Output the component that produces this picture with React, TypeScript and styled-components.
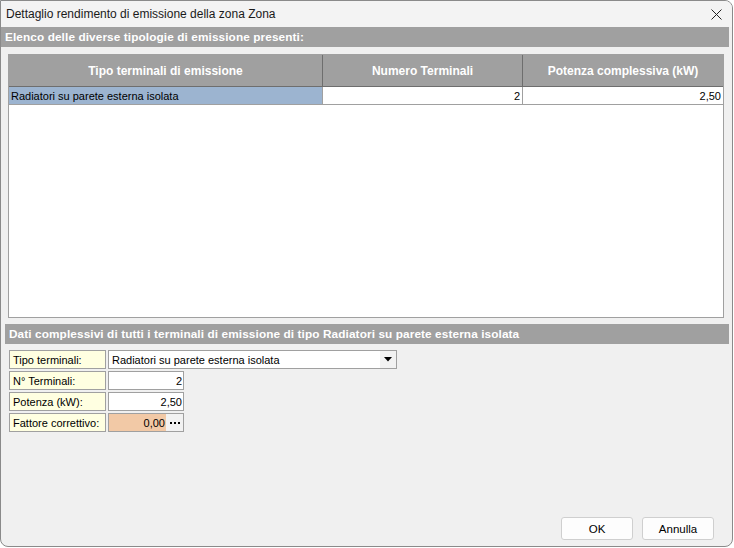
import React from "react";
import styled, { createGlobalStyle } from "styled-components";

const Global = createGlobalStyle`
  html, body {
    margin: 0;
    padding: 0;
    background: #ffffff;
  }
  body {
    font-family: "Liberation Sans", Arial, sans-serif;
    font-size: 11px;
    color: #000;
  }
`;

const Window = styled.div`
  width: 733px;
  height: 547px;
  box-sizing: border-box;
  border: 1px solid #8a8a8a;
  border-radius: 0 8px 8px 8px;
  background: #f0f0f0;
  display: flex;
  flex-direction: column;
  overflow: hidden;
`;

const TitleBar = styled.div`
  height: 26px;
  display: flex;
  align-items: center;
  justify-content: space-between;
  padding: 0 10px 0 5px;
  background: #f3f3f3;
  font-size: 12px;
  color: #1a1a1a;
`;

const CloseIcon = styled.svg`
  width: 11px;
  height: 11px;
  margin-top: 1px;
`;

const SectionBar = styled.div<{ $inset?: number; $top?: number }>`
  height: 20px;
  margin: ${({ $top }) => $top ?? 0}px 3px 0 ${({ $inset }) => $inset ?? 0}px;
  padding-left: 4px;
  background: #a0a0a0;
  color: #fff;
  font-weight: bold;
  font-size: 11.8px;
  letter-spacing: 0.1px;
  display: flex;
  align-items: center;
`;

const Grid = styled.div`
  margin: 7px 8px 0 7px;
  height: 264px;
  box-sizing: border-box;
  border: 1px solid #a0a0a0;
  background: #fff;
  display: flex;
  flex-direction: column;
`;

const Row = styled.div`
  display: grid;
  grid-template-columns: 314px 200px 1fr;
`;

const HeadCell = styled.div`
  height: 32px;
  box-sizing: border-box;
  background: #a0a0a0;
  border-right: 1px solid #6e6e6e;
  border-bottom: 1px solid #6e6e6e;
  color: #fff;
  font-weight: bold;
  font-size: 12px;
  display: flex;
  align-items: center;
  justify-content: center;
  &:last-child {
    border-right: none;
  }
`;

const DataCell = styled.div<{ $selected?: boolean; $right?: boolean }>`
  height: 18px;
  box-sizing: border-box;
  padding: 0 2px;
  background: ${({ $selected }) => ($selected ? "#9cb4d0" : "#ffffff")};
  border-right: 1px solid #a0a0a0;
  border-bottom: 1px solid #a0a0a0;
  display: flex;
  align-items: center;
  justify-content: ${({ $right }) => ($right ? "flex-end" : "flex-start")};
  white-space: nowrap;
  &:last-child {
    border-right: none;
  }
`;

const Form = styled.div`
  margin: 6px 0 0 8px;
  display: grid;
  grid-template-columns: 97px auto;
  grid-auto-rows: 19px;
  row-gap: 2px;
  column-gap: 2px;
  justify-content: start;
`;

const Label = styled.div`
  box-sizing: border-box;
  border: 1px solid #a0a0a0;
  background: #ffffe1;
  padding-left: 3px;
  display: flex;
  align-items: center;
  white-space: nowrap;
  overflow: hidden;
`;

const Field = styled.div<{ $width: number; $bg?: string }>`
  width: ${({ $width }) => $width}px;
  box-sizing: border-box;
  border: 1px solid #a0a0a0;
  background: ${({ $bg }) => $bg ?? "#ffffff"};
  display: flex;
  align-items: center;
  padding-left: 3px;
  white-space: nowrap;
`;

const FieldText = styled.span<{ $right?: boolean }>`
  flex: 1;
  text-align: ${({ $right }) => ($right ? "right" : "left")};
  padding-right: 1px;
`;

const SideButton = styled.div<{ $width: number }>`
  width: ${({ $width }) => $width}px;
  align-self: stretch;
  background: #f2f2f2;
  display: flex;
  align-items: center;
  justify-content: center;
`;

const Footer = styled.div`
  margin-top: auto;
  display: flex;
  justify-content: flex-end;
  gap: 9px;
  padding: 0 18px 6px 0;
`;

const Button = styled.button`
  width: 72px;
  height: 23px;
  box-sizing: border-box;
  border: 1px solid #cfcfcf;
  border-radius: 3px;
  background: #fdfdfd;
  font-family: "Liberation Sans", Arial, sans-serif;
  font-size: 11.5px;
  color: #000;
  padding: 0;
`;

const rows = [
  { tipo: "Radiatori su parete esterna isolata", numero: "2", potenza: "2,50" },
];

export default function App() {
  return (
    <>
      <Global />
      <Window>
        <TitleBar>
          <span>Dettaglio rendimento di emissione della zona Zona</span>
          <CloseIcon viewBox="0 0 11 11">
            <path d="M0.5 0.5 L10.5 10.5 M10.5 0.5 L0.5 10.5" stroke="#222" strokeWidth="1" fill="none" />
          </CloseIcon>
        </TitleBar>
        <SectionBar>Elenco delle diverse tipologie di emissione presenti:</SectionBar>
        <Grid>
          <Row>
            <HeadCell>Tipo terminali di emissione</HeadCell>
            <HeadCell>Numero Terminali</HeadCell>
            <HeadCell>Potenza complessiva (kW)</HeadCell>
          </Row>
          {rows.map((r) => (
            <Row key={r.tipo}>
              <DataCell $selected>{r.tipo}</DataCell>
              <DataCell $right>{r.numero}</DataCell>
              <DataCell $right>{r.potenza}</DataCell>
            </Row>
          ))}
        </Grid>
        <SectionBar $inset={4} $top={6}>
          Dati complessivi di tutti i terminali di emissione di tipo Radiatori su parete esterna isolata
        </SectionBar>
        <Form>
          <Label>Tipo terminali:</Label>
          <Field $width={289}>
            <FieldText>Radiatori su parete esterna isolata</FieldText>
            <SideButton $width={16}>
              <svg width="8" height="5" viewBox="0 0 8 5">
                <path d="M0 0 H8 L4 4.5 Z" fill="#000" />
              </svg>
            </SideButton>
          </Field>
          <Label>N° Terminali:</Label>
          <Field $width={76}>
            <FieldText $right>2</FieldText>
          </Field>
          <Label>Potenza (kW):</Label>
          <Field $width={76}>
            <FieldText $right>2,50</FieldText>
          </Field>
          <Label>Fattore correttivo:</Label>
          <Field $width={76} $bg="#f2c9a6">
            <FieldText $right>0,00</FieldText>
            <SideButton $width={17}>
              <svg width="10" height="2" viewBox="0 0 10 2">
                <rect x="0" y="0" width="2" height="2" fill="#000" />
                <rect x="4" y="0" width="2" height="2" fill="#000" />
                <rect x="8" y="0" width="2" height="2" fill="#000" />
              </svg>
            </SideButton>
          </Field>
        </Form>
        <Footer>
          <Button>OK</Button>
          <Button>Annulla</Button>
        </Footer>
      </Window>
    </>
  );
}
